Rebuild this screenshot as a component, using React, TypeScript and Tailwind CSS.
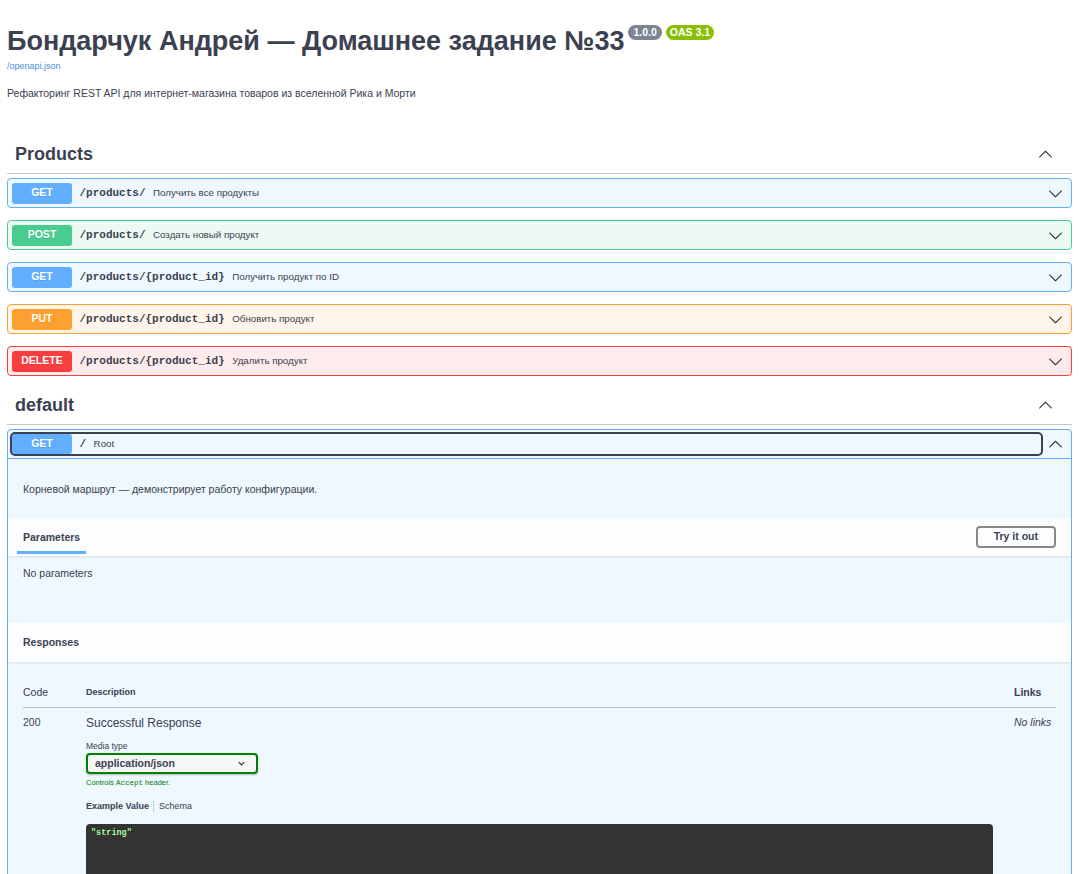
import React from 'react';

type Op = {
  method: string;
  path: string;
  summary: string;
  badge: string;
  row: string;
};

const ops: Op[] = [
  { method: 'GET', path: '/products/', summary: 'Получить все продукты', badge: 'bg-[#61affe]', row: 'border-[#61affe] bg-[#eff7ff]' },
  { method: 'POST', path: '/products/', summary: 'Создать новый продукт', badge: 'bg-[#49cc90]', row: 'border-[#49cc90] bg-[#edfaf4]' },
  { method: 'GET', path: '/products/{product_id}', summary: 'Получить продукт по ID', badge: 'bg-[#61affe]', row: 'border-[#61affe] bg-[#eff7ff]' },
  { method: 'PUT', path: '/products/{product_id}', summary: 'Обновить продукт', badge: 'bg-[#fca130]', row: 'border-[#fca130] bg-[#fff5ea]' },
  { method: 'DELETE', path: '/products/{product_id}', summary: 'Удалить продукт', badge: 'bg-[#f93e3e]', row: 'border-[#f93e3e] bg-[#feebeb]' },
];

const mono = "font-['Liberation_Mono','DejaVu_Sans_Mono',monospace]";

// swagger-ui arrow, pointing down unless `up`
const Arrow = ({ up = false }: { up?: boolean }) => (
  <svg viewBox="0 0 20 20" className={`h-[15px] w-[15px] shrink-0 fill-[#333] ${up ? 'rotate-180' : ''}`}>
    <path d="M17.418 6.109c.272-.268.709-.268.979 0s.271.701 0 .969l-7.908 7.83c-.27.268-.707.268-.979 0l-7.908-7.83c-.27-.268-.27-.701 0-.969.271-.268.709-.268.979 0L10 13.25l7.418-7.141z" />
  </svg>
);

const TagHeading = ({ title }: { title: string }) => (
  <div className="flex h-[39px] items-center justify-between border-b border-[#c4c6cb] pl-[8px] pr-[19px]">
    <h3 className="text-[18px] font-bold leading-[21px]">{title}</h3>
    <Arrow up />
  </div>
);

const MethodBadge = ({ method, color, tall = 'h-[21px]' }: { method: string; color: string; tall?: string }) => (
  <span
    className={`flex w-[60px] shrink-0 items-center justify-center rounded-[3px] text-[10.5px] font-bold text-white [text-shadow:0_1px_0_rgba(0,0,0,0.1)] ${tall} ${color}`}
  >
    {method}
  </span>
);

const OpRow = ({ op }: { op: Op }) => (
  <div className={`flex h-[30px] items-center rounded-[4px] border pl-[4px] pr-[8px] ${op.row}`}>
    <MethodBadge method={op.method} color={op.badge} />
    <span className={`px-[7.5px] text-[11px] font-bold ${mono}`}>{op.path}</span>
    <span className="flex-1 text-[9.75px]">{op.summary}</span>
    <Arrow />
  </div>
);

export default function App() {
  return (
    <div className="min-h-screen bg-white font-['Liberation_Sans',Arial,sans-serif] text-[#3b4151]">
      <div className="pl-[7px] pr-[12px]">
        {/* Info */}
        <div className="flex items-start pt-[26px]">
          <h2 className="text-[27px] font-bold leading-[31px]">Бондарчук Андрей — Домашнее задание №33</h2>
          <span className="ml-[4px] mt-[-1px] rounded-full bg-[#7d8492] px-[5px] text-[10.5px] font-bold leading-[15px] text-white">1.0.0</span>
          <span className="ml-[4px] mt-[-1px] rounded-full bg-[#89bf04] px-[4px] text-[10.5px] font-bold leading-[15px] text-white">OAS 3.1</span>
        </div>
        <a className="mt-[3.5px] block text-[9px] leading-[11px] text-[#4990e2]">/openapi.json</a>
        <p className="mt-[15.5px] text-[10.5px] leading-[12px]">
          Рефакторинг REST API для интернет-магазина товаров из вселенной Рика и Морти
        </p>

        {/* Products */}
        <div className="mt-[36px]">
          <TagHeading title="Products" />
          <div className="mt-[4px] flex flex-col gap-[12px]">
            {ops.map((op, i) => (
              <OpRow key={i} op={op} />
            ))}
          </div>
        </div>

        {/* default */}
        <div className="mt-[10px]">
          <TagHeading title="default" />
          <div className="mt-[4px] rounded-[4px] border border-[#61affe] bg-[#eff7ff]">
            <div className="flex h-[29px] items-center border-b border-[#61affe] pl-[4px] pr-[8px]">
              <div className="mr-[7px] flex h-[20px] flex-1 items-center rounded-[3px] outline-2 outline-[#3b4151]">
                <MethodBadge method="GET" color="bg-[#61affe]" tall="h-[20px]" />
                <span className={`px-[7.5px] text-[11px] font-bold ${mono}`}>/</span>
                <span className="text-[9.75px]">Root</span>
              </div>
              <Arrow up />
            </div>

            <div className="flex h-[59px] items-center px-[15px] text-[10.5px] leading-[12px]">
              Корневой маршрут — демонстрирует работу конфигурации.
            </div>

            <div className="flex h-[38px] items-center justify-between bg-white/80 px-[15px] shadow-[0_1px_2px_rgba(0,0,0,0.1)]">
              <div className="mb-[2px] ml-[-6px] self-end border-b-[3px] border-[#61affe] px-[6px] pb-[8px] text-[10.5px] font-bold leading-[12px]">
                Parameters
              </div>
              <button className="h-[22px] rounded-[4px] border-2 border-[#888] px-[16px] text-[10.5px] font-bold text-[#3b4151]">
                Try it out
              </button>
            </div>
            <div className="h-[67px] px-[15px] pt-[11px] text-[10.5px] leading-[12px]">No parameters</div>

            <div className="flex h-[39px] items-center bg-white/80 px-[15px] text-[10.5px] font-bold shadow-[0_1px_2px_rgba(0,0,0,0.1)]">
              Responses
            </div>

            <div className="px-[15px] pt-[15px]">
              <div className="flex border-b border-[#b9bdc5] py-[9px] leading-[12px]">
                <div className="w-[63px] text-[10.5px]">Code</div>
                <div className="flex-1 text-[9px] font-bold">Description</div>
                <div className="w-[42px] text-[10.5px] font-bold">Links</div>
              </div>
              <div className="flex pt-[7.5px]">
                <div className="w-[63px] text-[10.5px] leading-[12px]">200</div>
                <div className="flex-1 pr-[21px]">
                  <div className="text-[12px] leading-[14px]">Successful Response</div>
                  <div className="mt-[11.5px] text-[8.5px] leading-[10px]">Media type</div>
                  <div className="mt-[2px] flex h-[21px] w-[172px] items-center justify-between rounded-[4px] border-2 border-[#008000] bg-[#f7f7f7] pl-[7px] pr-[11px] text-[10.5px] font-bold shadow-[0_1px_2px_rgba(0,0,0,0.25)]">
                    application/json
                    <svg viewBox="0 0 10 6" className="h-[5px] w-[7px]">
                      <path d="M1 1l4 4 4-4" fill="none" stroke="#333" strokeWidth="1.6" />
                    </svg>
                  </div>
                  <div className="mt-[3.5px] text-[7.5px] leading-[9px] text-[#008000]">
                    Controls <span className={mono}>Accept</span> header.
                  </div>
                  <div className="mt-[13px] flex text-[9px] leading-[11px]">
                    <span className="border-r border-[#c8ccd2] pr-[4px] font-bold">Example Value</span>
                    <span className="pl-[5px]">Schema</span>
                  </div>
                  <div className={`mt-[12.5px] h-[60px] rounded-[4px] bg-[#333] pl-[5px] pt-[3.5px] text-[8.5px] font-bold leading-[11px] text-[#a2fca2] ${mono}`}>
                    "string"
                  </div>
                </div>
                <div className="w-[42px] text-[10.5px] italic leading-[12px]">No links</div>
              </div>
            </div>
          </div>
        </div>
      </div>
    </div>
  );
}
